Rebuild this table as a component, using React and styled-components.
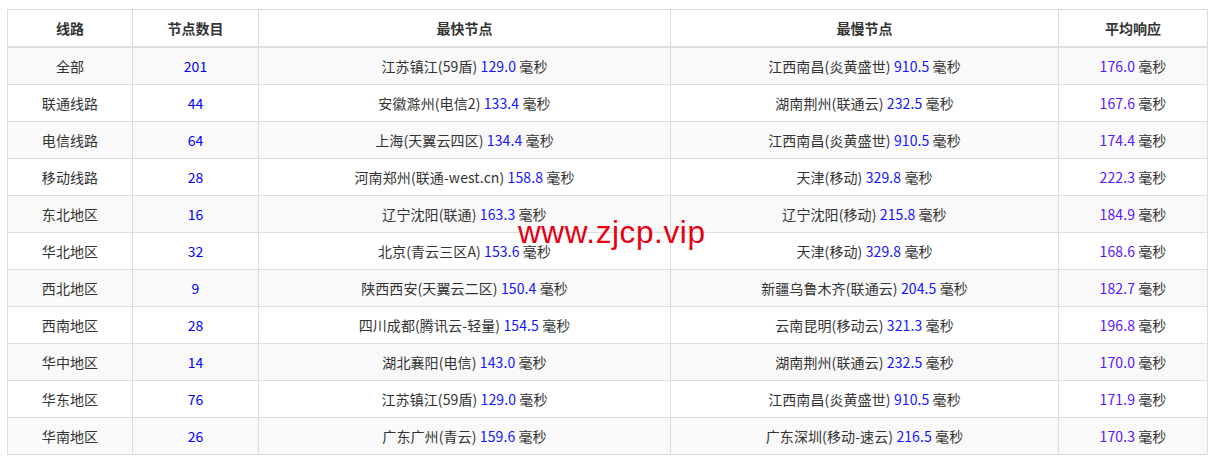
import React from 'react';
import styled, { createGlobalStyle } from 'styled-components';

const GlobalStyle = createGlobalStyle`
   html, body {
      margin: 0;
      padding: 0;
      background: #fff;
   }
   body {
      font-family: "Noto Sans CJK SC", "Liberation Sans", sans-serif;
      color: #333;
   }
`;

const Page = styled.div`
   position: relative;
   padding: 9px 0 0 7px;
`;

const Table = styled.table`
   width: 1200px;
   border-collapse: collapse;
   border-spacing: 0;
   table-layout: fixed;
   font-size: 14px;
`;

const HeadCell = styled.th`
   height: 35px;
   padding: 0 0 1px;
   border: 1px solid #ddd;
   border-bottom: 2px solid #ddd;
   font-weight: bold;
   color: #333;
   text-align: center;
   vertical-align: middle;
`;

const Row = styled.tr`
   background: ${props => (props.striped ? '#f9f9f9' : '#fff')};
`;

const Cell = styled.td`
   height: 35px;
   padding: 0 0 1px;
   border: 1px solid #ddd;
   text-align: center;
   vertical-align: middle;
   white-space: nowrap;
   letter-spacing: 0.1px;
`;

const Count = styled.span`
   color: #0000ff;
`;

const Ms = styled.span`
   color: ${props => (props.avg ? '#5a14ff' : '#1414ff')};
`;

const Watermark = styled.div`
   position: absolute;
   left: 518px;
   top: 212px;
   font-family: "Liberation Sans", sans-serif;
   font-size: 31.5px;
   letter-spacing: 0.6px;
   color: #e60012;
   line-height: 40px;
   pointer-events: none;
`;

const columns = [
   { title: '线路', width: 125 },
   { title: '节点数目', width: 126 },
   { title: '最快节点', width: 412 },
   { title: '最慢节点', width: 388 },
   { title: '平均响应', width: 149 },
];

const rows = [
   ['全部', '201', '江苏镇江(59盾)', '129.0', '江西南昌(炎黄盛世)', '910.5', '176.0'],
   ['联通线路', '44', '安徽滁州(电信2)', '133.4', '湖南荆州(联通云)', '232.5', '167.6'],
   ['电信线路', '64', '上海(天翼云四区)', '134.4', '江西南昌(炎黄盛世)', '910.5', '174.4'],
   ['移动线路', '28', '河南郑州(联通-west.cn)', '158.8', '天津(移动)', '329.8', '222.3'],
   ['东北地区', '16', '辽宁沈阳(联通)', '163.3', '辽宁沈阳(移动)', '215.8', '184.9'],
   ['华北地区', '32', '北京(青云三区A)', '153.6', '天津(移动)', '329.8', '168.6'],
   ['西北地区', '9', '陕西西安(天翼云二区)', '150.4', '新疆乌鲁木齐(联通云)', '204.5', '182.7'],
   ['西南地区', '28', '四川成都(腾讯云-轻量)', '154.5', '云南昆明(移动云)', '321.3', '196.8'],
   ['华中地区', '14', '湖北襄阳(电信)', '143.0', '湖南荆州(联通云)', '232.5', '170.0'],
   ['华东地区', '76', '江苏镇江(59盾)', '129.0', '江西南昌(炎黄盛世)', '910.5', '171.9'],
   ['华南地区', '26', '广东广州(青云)', '159.6', '广东深圳(移动-速云)', '216.5', '170.3'],
];

const App = () => (
   <Page>
      <GlobalStyle />
      <Table>
         <colgroup>
            {columns.map(c => <col key={c.title} style={{ width: c.width }} />)}
         </colgroup>
         <thead>
            <tr>
               {columns.map(c => <HeadCell key={c.title}>{c.title}</HeadCell>)}
            </tr>
         </thead>
         <tbody>
            {rows.map((r, i) => (
               <Row key={r[0]} striped={i % 2 === 0}>
                  <Cell>{r[0]}</Cell>
                  <Cell><Count>{r[1]}</Count></Cell>
                  <Cell>{r[2]} <Ms>{r[3]}</Ms> 毫秒</Cell>
                  <Cell>{r[4]} <Ms>{r[5]}</Ms> 毫秒</Cell>
                  <Cell><Ms avg>{r[6]}</Ms> 毫秒</Cell>
               </Row>
            ))}
         </tbody>
      </Table>
      <Watermark>www.zjcp.vip</Watermark>
   </Page>
);

export default App;
